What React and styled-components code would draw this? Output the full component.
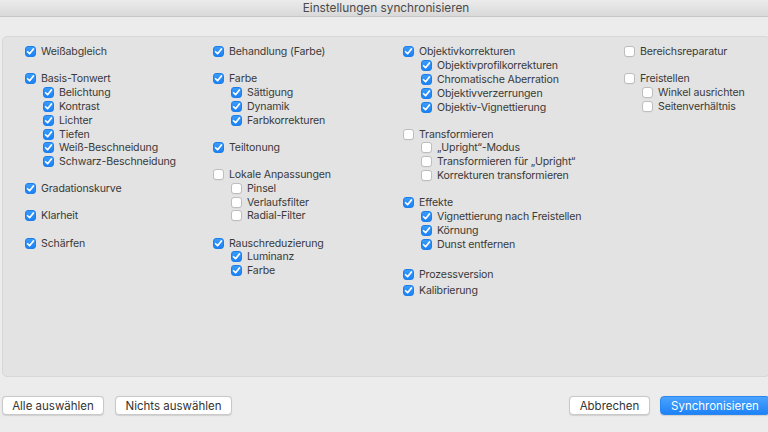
import React from 'react';
import styled, { createGlobalStyle } from 'styled-components';

const Global = createGlobalStyle`
  html, body { margin: 0; padding: 0; overflow: hidden; background: #ececec; }
  body { font-family: Inter, "Noto Sans", sans-serif; -webkit-font-smoothing: antialiased; }
`;

const Window = styled.div`
  width: 772px;
  height: 432px;
  display: flex;
  flex-direction: column;
  background: #ececec;
`;

const TitleBar = styled.div`
  flex: none;
  height: 16px;
  background: linear-gradient(#ececec, #d9d9d9);
  border-bottom: 1px solid #c6c6c6;
  display: flex;
  align-items: center;
  justify-content: center;
  font-size: 11.8px;
  color: #4a4a4a;
`;

const Body = styled.div`
  flex: 1;
  display: flex;
  flex-direction: column;
  padding: 19px 2px 0;
`;

const Panel = styled.div`
  height: 341px;
  box-sizing: border-box;
  background: #e3e3e3;
  border: 1px solid #d7d7d7;
  border-radius: 5px;
  padding: 8px 0 0 22px;
  display: grid;
  grid-template-columns: 188px 190px 221px 1fr;
  align-items: start;
`;

const Column = styled.div`
  display: flex;
  flex-direction: column;
`;

const Group = styled.div`
  display: flex;
  flex-direction: column;
  margin-top: ${p => (p.$gap != null ? p.$gap : 13.3)}px;
  &:first-child { margin-top: 0; }
`;

const Row = styled.div`
  height: 13.8px;
  display: flex;
  align-items: center;
  gap: 5px;
  padding-left: ${p => (p.$sub ? 18 : 0)}px;
  font-size: 10.6px;
  letter-spacing: -0.15px;
  color: #3a3a3a;
  white-space: nowrap;
`;

const Box = styled.span`
  flex: none;
  width: 11px;
  height: 11px;
  box-sizing: border-box;
  border-radius: 3px;
  display: flex;
  align-items: center;
  justify-content: center;
  background: ${p => (p.$on ? 'linear-gradient(#3a9bfb, #1c82f6)' : '#ffffff')};
  border: 1px solid ${p => (p.$on ? '#1f7fe8' : '#bdbdbd')};
  box-shadow: ${p => (p.$on ? 'none' : '0 0.5px 0 rgba(0,0,0,0.05)')};
`;

const Footer = styled.div`
  display: flex;
  align-items: center;
  margin-top: 19px;
  gap: 11px;
`;

const Spacer = styled.div`
  flex: 1;
`;

const Button = styled.button`
  height: 19px;
  box-sizing: border-box;
  padding: 0;
  width: ${p => p.$w}px;
  font-family: Inter, "Noto Sans", sans-serif;
  font-size: 11.5px;
  border-radius: 4px;
  margin-left: ${p => p.$ml || 0}px;
  color: ${p => (p.$primary ? '#ffffff' : '#333333')};
  background: ${p => (p.$primary ? 'linear-gradient(#4aa3fd, #1e83f7)' : '#ffffff')};
  border: 1px solid ${p => (p.$primary ? '#2a86f0' : '#c9c9c9')};
  box-shadow: 0 0.5px 1px rgba(0, 0, 0, 0.12);
  display: flex;
  align-items: center;
  justify-content: center;
`;

const Check = () => (
  <svg width="9" height="9" viewBox="0 0 8 8">
    <path d="M1.4 4.2 L3.2 6 L6.6 1.7" fill="none" stroke="#fff" strokeWidth="1.5" strokeLinecap="round" strokeLinejoin="round" />
  </svg>
);

const Item = ({ on, sub, children }) => (
  <Row $sub={sub}>
    <Box $on={on}>{on && <Check />}</Box>
    <span>{children}</span>
  </Row>
);

const columns = [
  [
    { items: [['Weißabgleich', true]] },
    { items: [['Basis-Tonwert', true], ['Belichtung', true, 1], ['Kontrast', true, 1], ['Lichter', true, 1], ['Tiefen', true, 1], ['Weiß-Beschneidung', true, 1], ['Schwarz-Beschneidung', true, 1]] },
    { items: [['Gradationskurve', true]] },
    { items: [['Klarheit', true]] },
    { items: [['Schärfen', true]] },
  ],
  [
    { items: [['Behandlung (Farbe)', true]] },
    { items: [['Farbe', true], ['Sättigung', true, 1], ['Dynamik', true, 1], ['Farbkorrekturen', true, 1]] },
    { items: [['Teiltonung', true]] },
    { items: [['Lokale Anpassungen', false], ['Pinsel', false, 1], ['Verlaufsfilter', false, 1], ['Radial-Filter', false, 1]] },
    { items: [['Rauschreduzierung', true], ['Luminanz', true, 1], ['Farbe', true, 1]] },
  ],
  [
    { items: [['Objektivkorrekturen', true], ['Objektivprofilkorrekturen', true, 1], ['Chromatische Aberration', true, 1], ['Objektivverzerrungen', true, 1], ['Objektiv-Vignettierung', true, 1]] },
    { items: [['Transformieren', false], ['„Upright“-Modus', false, 1], ['Transformieren für „Upright“', false, 1], ['Korrekturen transformieren', false, 1]] },
    { items: [['Effekte', true], ['Vignettierung nach Freistellen', true, 1], ['Körnung', true, 1], ['Dunst entfernen', true, 1]] },
    { gap: 16.2, items: [['Prozessversion', true]] },
    { gap: 2.2, items: [['Kalibrierung', true]] },
  ],
  [
    { items: [['Bereichsreparatur', false]] },
    { items: [['Freistellen', false], ['Winkel ausrichten', false, 1], ['Seitenverhältnis', false, 1]] },
  ],
];

export default function App() {
  return (
    <>
      <Global />
      <Window>
        <TitleBar>Einstellungen synchronisieren</TitleBar>
        <Body>
          <Panel>
            {columns.map((col, ci) => (
              <Column key={ci}>
                {col.map((g, gi) => (
                  <Group key={gi} $gap={g.gap}>
                    {g.items.map(([label, on, sub], ii) => (
                      <Item key={ii} on={on} sub={!!sub}>{label}</Item>
                    ))}
                  </Group>
                ))}
              </Column>
            ))}
          </Panel>
          <Footer>
            <Button $w={102}>Alle auswählen</Button>
            <Button $w={117}>Nichts auswählen</Button>
            <Spacer />
            <Button $w={81}>Abbrechen</Button>
            <Button $w={110} $primary $ml={-1}>Synchronisieren</Button>
          </Footer>
        </Body>
      </Window>
    </>
  );
}
